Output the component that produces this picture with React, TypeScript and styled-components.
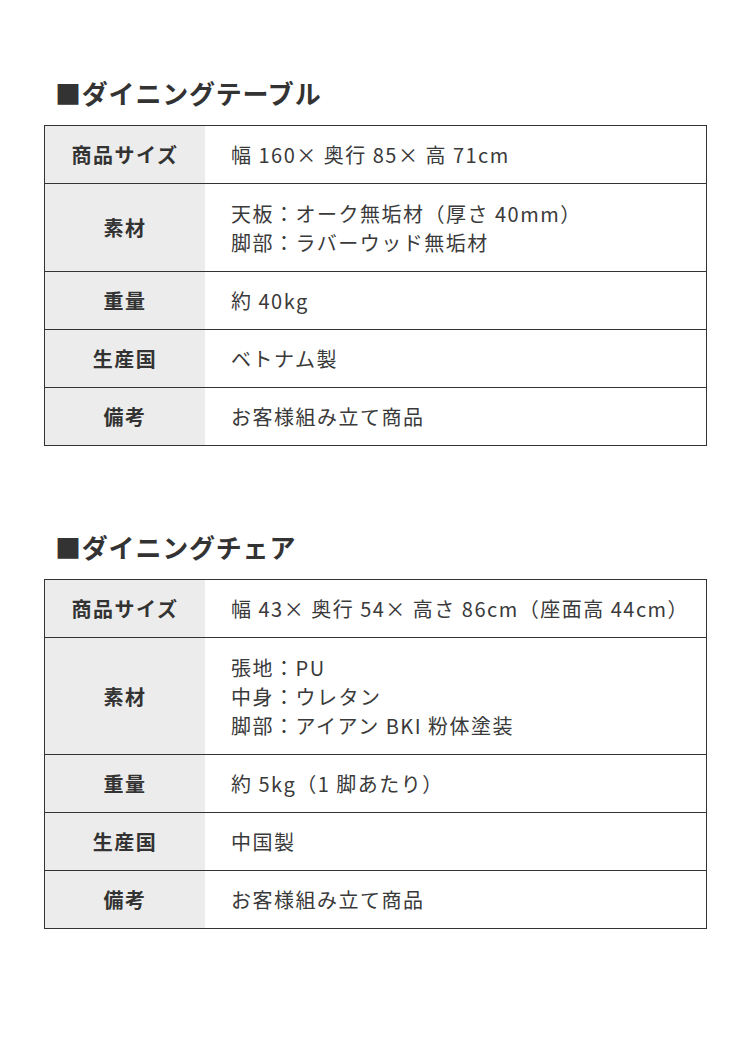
import styled, { createGlobalStyle } from "styled-components";

const GlobalStyle = createGlobalStyle`
  html, body {
    margin: 0;
    padding: 0;
    background: #ffffff;
  }
  body {
    font-family: "Noto Sans CJK JP", "Noto Sans", sans-serif;
    color: #333333;
  }
`;

const Page = styled.div`
  width: 750px;
  height: 1063px;
  padding: 75px 43px 0 44px;
  box-sizing: border-box;
  display: flex;
  flex-direction: column;
  gap: 83px;
`;

const Section = styled.section`
  display: flex;
  flex-direction: column;
  gap: 14px;
`;

const Title = styled.h2`
  margin: 0;
  padding-left: 11px;
  font-size: 26px;
  line-height: 36px;
  font-weight: 700;
  letter-spacing: 0.8px;
  color: #333333;
`;

const Table = styled.div`
  border: 1px solid #333333;
  display: flex;
  flex-direction: column;
`;

const Row = styled.div`
  display: grid;
  grid-template-columns: 160px 1fr;
  & + & {
    border-top: 1px solid #333333;
  }
`;

const Head = styled.div`
  background: #ececec;
  display: flex;
  align-items: center;
  justify-content: center;
  font-size: 20px;
  font-weight: 700;
  letter-spacing: 1.5px;
  color: #333333;
`;

const Value = styled.div<{ $multi: boolean }>`
  padding: ${({ $multi }) => ($multi ? "14.5px" : "14px")} 0
    ${({ $multi }) => ($multi ? "14.5px" : "14px")} 26px;
  font-size: 20px;
  line-height: 29px;
  letter-spacing: 1.5px;
  color: #3a3a3a;
  white-space: pre-line;
`;

type Spec = { label: string; value: string };

const tableSpecs: Spec[] = [
  { label: "商品サイズ", value: "幅 160× 奥行 85× 高 71cm" },
  { label: "素材", value: "天板：オーク無垢材（厚さ 40mm）\n脚部：ラバーウッド無垢材" },
  { label: "重量", value: "約 40kg" },
  { label: "生産国", value: "ベトナム製" },
  { label: "備考", value: "お客様組み立て商品" },
];

const chairSpecs: Spec[] = [
  { label: "商品サイズ", value: "幅 43× 奥行 54× 高さ 86cm（座面高 44cm）" },
  { label: "素材", value: "張地：PU\n中身：ウレタン\n脚部：アイアン BKI 粉体塗装" },
  { label: "重量", value: "約 5kg（1 脚あたり）" },
  { label: "生産国", value: "中国製" },
  { label: "備考", value: "お客様組み立て商品" },
];

const SpecTable: React.FC<{ title: string; specs: Spec[] }> = ({ title, specs }) => (
  <Section>
    <Title>■{title}</Title>
    <Table>
      {specs.map((s) => (
        <Row key={s.label}>
          <Head>{s.label}</Head>
          <Value $multi={s.value.includes("\n")}>{s.value}</Value>
        </Row>
      ))}
    </Table>
  </Section>
);

export default function App() {
  return (
    <>
      <GlobalStyle />
      <Page>
        <SpecTable title="ダイニングテーブル" specs={tableSpecs} />
        <SpecTable title="ダイニングチェア" specs={chairSpecs} />
      </Page>
    </>
  );
}
